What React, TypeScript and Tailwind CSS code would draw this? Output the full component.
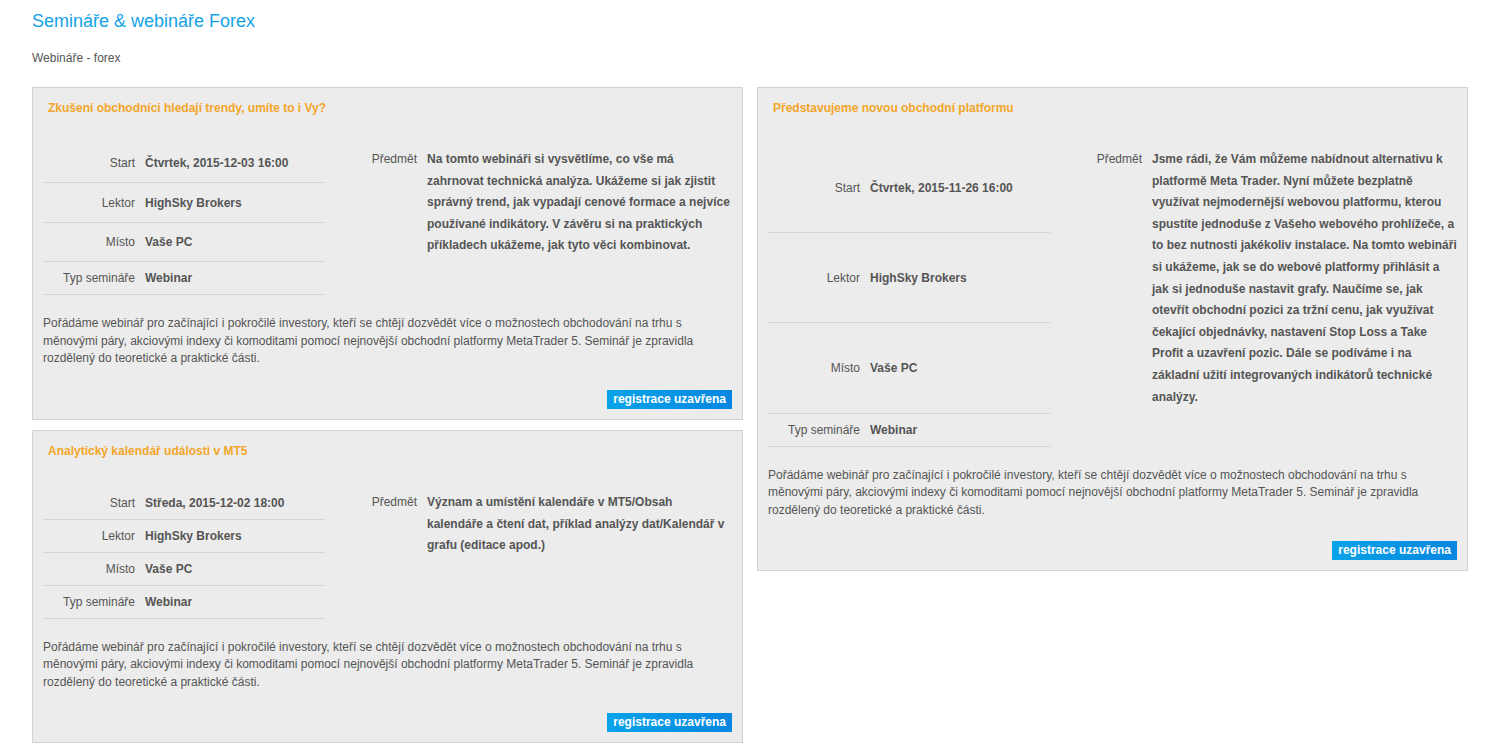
import React from "react";

type Seminar = {
  title: string;
  start: string;
  subject: string[];
};

const desc = [
  "Pořádáme webinář pro začínající i pokročilé investory, kteří se chtějí dozvědět více o možnostech obchodování na trhu s",
  "měnovými páry, akciovými indexy či komoditami pomocí nejnovější obchodní platformy MetaTrader 5. Seminář je zpravidla",
  "rozdělený do teoretické a praktické části.",
];

const s1: Seminar = {
  title: "Zkušení obchodníci hledají trendy, umíte to i Vy?",
  start: "Čtvrtek, 2015-12-03 16:00",
  subject: [
    "Na tomto webináři si vysvětlíme, co vše má",
    "zahrnovat technická analýza. Ukážeme si jak zjistit",
    "správný trend, jak vypadají cenové formace a nejvíce",
    "používané indikátory. V závěru si na praktických",
    "příkladech ukážeme, jak tyto věci kombinovat.",
  ],
};

const s2: Seminar = {
  title: "Analytický kalendář události v MT5",
  start: "Středa, 2015-12-02 18:00",
  subject: [
    "Význam a umístění kalendáře v MT5/Obsah",
    "kalendáře a čtení dat, příklad analýzy dat/Kalendář v",
    "grafu (editace apod.)",
  ],
};

const s3: Seminar = {
  title: "Představujeme novou obchodní platformu",
  start: "Čtvrtek, 2015-11-26 16:00",
  subject: [
    "Jsme rádi, že Vám můžeme nabídnout alternativu k",
    "platformě Meta Trader. Nyní můžete bezplatně",
    "využívat nejmodernější webovou platformu, kterou",
    "spustíte jednoduše z Vašeho webového prohlížeče, a",
    "to bez nutnosti jakékoliv instalace. Na tomto webináři",
    "si ukážeme, jak se do webové platformy přihlásit a",
    "jak si jednoduše nastavit grafy. Naučíme se, jak",
    "otevřít obchodní pozici za tržní cenu, jak využívat",
    "čekající objednávky, nastavení Stop Loss a Take",
    "Profit a uzavření pozic. Dále se podíváme i na",
    "základní užití integrovaných indikátorů technické",
    "analýzy.",
  ],
};

const labelCls =
  "pr-[10px] py-[5px] text-right align-middle font-normal leading-[22px] border-b border-[#d6d6d0] whitespace-nowrap";
const valueCls =
  "pl-0 py-[5px] text-left align-middle font-bold leading-[22px] border-b border-[#d6d6d0] whitespace-nowrap";

function Card({ s }: { s: Seminar }) {
  return (
    <div className="border border-[#d2d2d2] bg-[#ececec] p-[10px]">
      <div className="px-[5px] text-[12px] font-bold leading-[20px] text-[#f2a62a]">{s.title}</div>
      <table className="mt-[26px] w-[690px] table-fixed border-collapse text-[12px] text-[#555]">
        <colgroup>
          <col className="w-[102px]" />
          <col className="w-[180px]" />
          <col className="w-[100px]" />
          <col />
        </colgroup>
        <tbody>
          <tr>
            <td className={labelCls}>Start</td>
            <td className={valueCls}>{s.start}</td>
            <td rowSpan={3} className="pr-[8px] py-[5px] text-right align-top leading-[21.6px]">
              Předmět
            </td>
            <td rowSpan={3} className="pl-[2px] py-[5px] align-top font-bold leading-[21.6px] whitespace-nowrap">
              {s.subject.map((l, i) => (
                <div key={i}>{l}</div>
              ))}
            </td>
          </tr>
          <tr>
            <td className={labelCls}>Lektor</td>
            <td className={valueCls}>HighSky Brokers</td>
          </tr>
          <tr>
            <td className={labelCls}>Místo</td>
            <td className={valueCls}>Vaše PC</td>
          </tr>
          <tr>
            <td className={labelCls}>Typ semináře</td>
            <td className={valueCls}>Webinar</td>
            <td colSpan={2}></td>
          </tr>
        </tbody>
      </table>
      <div className="mt-[20px] text-[12px] leading-[17.5px] text-[#555]">
        {desc.map((l, i) => (
          <div key={i} className="whitespace-nowrap">
            {l}
          </div>
        ))}
      </div>
      <div className="mt-[22px] flex justify-end">
        <button className="h-[19px] bg-gradient-to-r from-[#0aa3e8] to-[#0886e0] px-[6px] text-[12px] font-bold leading-[19px] text-white">
          registrace uzavřena
        </button>
      </div>
    </div>
  );
}

export default function App() {
  return (
    <div
      className="min-h-[750px] bg-white px-[32px] pt-[9px]"
      style={{ fontFamily: '"Liberation Sans", Arial, sans-serif' }}
    >
      <h1 className="text-[18px] leading-[24px] text-[#14a3e6]">Semináře &amp; webináře Forex</h1>
      <div className="mt-[18px] text-[12px] leading-[14px] text-[#555]">Webináře - forex</div>
      <div className="mt-[22px] flex items-start gap-[14px]">
        <div className="flex w-[711px] flex-col gap-[10px]">
          <Card s={s1} />
          <Card s={s2} />
        </div>
        <div className="w-[711px]">
          <Card s={s3} />
        </div>
      </div>
    </div>
  );
}
